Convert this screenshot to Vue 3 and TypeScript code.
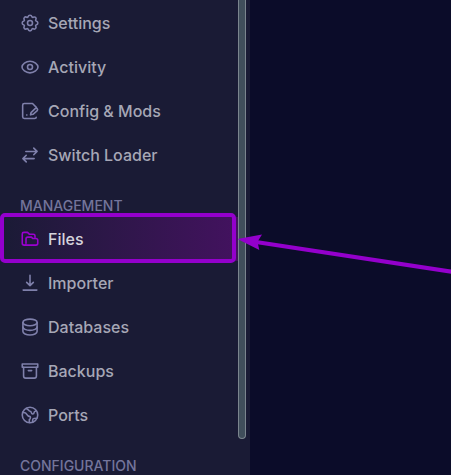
<script setup lang="ts">
import { ref } from 'vue'

interface NavItem {
  label: string
  paths: string[]
}

interface NavGroup {
  title?: string
  items: NavItem[]
}

const active = ref('Files')

const groups: NavGroup[] = [
  {
    items: [
      {
        label: 'Settings',
        paths: [
          'M9.6 4.6 Q10.1 2.6 12 2.6 T14.4 4.6 Q14.8 5.6 15.8 5.1 Q17.5 4.3 18.7 5.3 T18.9 8.2 Q18.4 9.2 19.4 9.6 Q21.4 10.2 21.4 12 T19.4 14.4 Q18.4 14.8 18.9 15.8 Q19.8 17.5 18.7 18.7 T15.8 18.9 Q14.8 18.4 14.4 19.4 Q13.9 21.4 12 21.4 T9.6 19.4 Q9.2 18.4 8.2 18.9 Q6.5 19.8 5.3 18.7 T5.1 15.8 Q5.6 14.8 4.6 14.4 Q2.6 13.9 2.6 12 T4.6 9.6 Q5.6 9.2 5.1 8.2 Q4.2 6.5 5.3 5.3 T8.2 5.1 Q9.2 5.6 9.6 4.6 Z',
          'M15 12a3 3 0 1 1-6 0 3 3 0 0 1 6 0Z',
        ],
      },
      {
        label: 'Activity',
        paths: [
          'M2.4 12C2.4 8.6 7 5 12 5s9.6 3.6 9.6 7-4.6 7-9.6 7-9.6-3.6-9.6-7Z',
          'M15 12a3 3 0 1 1-6 0 3 3 0 0 1 6 0Z',
        ],
      },
      {
        label: 'Config & Mods',
        paths: [
          'M19.6 8.5V7.6L15 3H5.2Q3.2 3 3.2 5v14q0 2 2 2H17.5q2 0 2-1.5',
          'M12.6 16.6l.6-2.7 5-4.8q1.3-1 2.4.1t.1 2.4L15.6 16Z',
          'M8 16.8h.3',
        ],
      },
      {
        label: 'Switch Loader',
        paths: ['M7 7.7h13.5M16.5 3.7l4 4-4 4', 'M17 16.3H3.5M7.5 12.3l-4 4 4 4'],
      },
    ],
  },
  {
    title: 'MANAGEMENT',
    items: [
      {
        label: 'Files',
        paths: [
          'M7 19.3H5Q2.7 19.3 2.7 17V6Q2.7 4 4.7 4H9l2.2 2.2H16q2 0 2 2V10',
          'M7.2 17.2V12q0-2.3 2.2-2.3h4.2l1.6 1.6h3.8q2.3 0 2.3 2.2v3.6q0 2.2-2.2 2.2H6.5',
        ],
      },
      { label: 'Importer', paths: ['M12 2.8v12.4M8 11.2l4 4 4-4', 'M3.8 20.5h16.4'] },
      {
        label: 'Databases',
        paths: [
          'M20.5 6.5c0 2.2-3.8 4-8.5 4s-8.5-1.8-8.5-4 3.8-4 8.5-4 8.5 1.8 8.5 4Z',
          'M3.5 6.5v11c0 2.2 3.8 4 8.5 4s8.5-1.8 8.5-4v-11',
          'M3.5 12c0 2.2 3.8 4 8.5 4s8.5-1.8 8.5-4',
        ],
      },
      {
        label: 'Backups',
        paths: ['M2.7 3.5h18.6v4H2.7Z', 'M4.3 7.5V18q0 2.5 2.5 2.5h10.4q2.5 0 2.5-2.5V7.5', 'M10 11.5h4'],
      },
      {
        label: 'Ports',
        paths: [
          'M21.3 12a9.3 9.3 0 1 1-18.6 0 9.3 9.3 0 0 1 18.6 0Z',
          'M3.5 8.8l3.2.8 2.6 3q.7 1 2 1t1.2 1.7-1.3 2V21',
          'M7.5 4l2.8 2.2q.6 1.2 1.8 1.2t1.5 1.7 1.7 1.6 1.6-1.5 1.2-1.6L19.7 7',
          'M15.2 20.5v-2.4q0-1.7 1.4-1.8l3.6-.3',
        ],
      },
    ],
  },
  { title: 'CONFIGURATION', items: [] },
]
</script>

<template>
  <div class="layout">
    <aside class="sidebar">
      <nav class="nav">
        <section v-for="(group, i) in groups" :key="i" class="group">
          <h2 v-if="group.title" class="title">{{ group.title }}</h2>
          <a
            v-for="item in group.items"
            :key="item.label"
            href="#"
            class="item"
            :class="{ active: active === item.label }"
            @click.prevent="active = item.label"
          >
            <svg class="icon" viewBox="0 0 24 24" aria-hidden="true">
              <path v-for="d in item.paths" :key="d" :d="d" />
            </svg>
            <span>{{ item.label }}</span>
          </a>
        </section>
      </nav>
      <div class="track"><div class="thumb"></div></div>
    </aside>
    <main class="content"></main>
    <svg class="pointer" viewBox="0 0 215 40" aria-hidden="true">
      <path class="shaft" d="M20 6 216 35.8" />
      <path class="head" d="M1.5 3 26 -1.5 21.5 5.8 23.3 14Z" />
    </svg>
  </div>
</template>

<style>
body {
  background: #0b0c29;
}
</style>

<style scoped>
.layout {
  position: relative;
  display: flex;
  height: 100vh;
  overflow: hidden;
  background: #0b0c29;
  font-family: Inter, "Liberation Sans", sans-serif;
}

.sidebar {
  display: flex;
  flex: 0 0 250px;
  box-sizing: border-box;
  padding-right: 4px;
  background: #1a1b35;
}

.nav {
  flex: 1;
  padding-top: 1px;
}

.title {
  margin: 18px 0 0;
  padding-left: 20px;
  color: #74759b;
  font-size: 14px;
  font-weight: 500;
  line-height: 22px;
}

.item {
  position: relative;
  display: flex;
  align-items: center;
  gap: 8px;
  height: 44px;
  padding-left: 20px;
  color: #a6a7b6;
  font-size: 16px;
  font-weight: 500;
  line-height: 24px;
  text-decoration: none;
}

.icon {
  width: 20px;
  height: 20px;
  fill: none;
  stroke: #7f80ab;
  stroke-width: 1.9;
  stroke-linecap: round;
  stroke-linejoin: round;
}

.active {
  background: linear-gradient(90deg, #1a1b35, #43125f);
  color: #d6d4dc;
}

.active .icon {
  stroke: #9a00d0;
}

.active::after {
  position: absolute;
  inset: -4px 2px -2px 0;
  border: 4px solid #9400cc;
  border-radius: 5px;
  content: "";
}

.track {
  width: 8px;
}

.thumb {
  box-sizing: border-box;
  height: 92.5%;
  border: 1px solid #7b858e;
  border-top: 0;
  border-radius: 0 0 4px 4px;
  background: #404e5b;
}

.content {
  flex: 1;
}

.pointer {
  position: absolute;
  top: 236px;
  left: 236px;
  width: 215px;
  height: 40px;
  overflow: visible;
}

.shaft {
  fill: none;
  stroke: #9400cc;
  stroke-width: 4;
}

.head {
  fill: #9400cc;
}
</style>
